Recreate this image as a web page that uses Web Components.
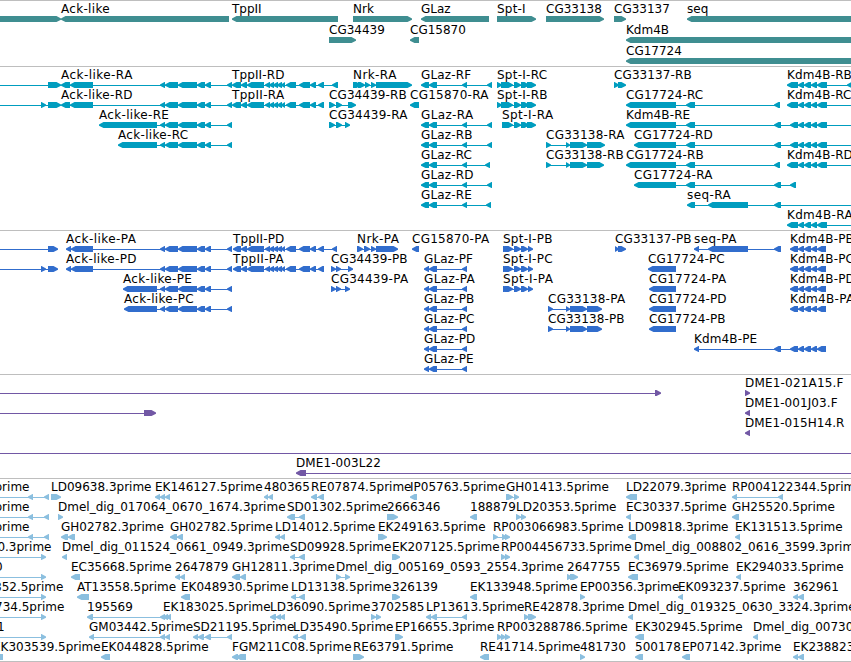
<!DOCTYPE html>
<html lang="en">
<head>
<meta charset="utf-8">
<title>Genome browser</title>
<style>
    html, body {
        margin: 0;
        background: #fff;
    }
</style>
</head>
<body>

<genome-view>
    <browser-track type="gene"></browser-track>
    <browser-track type="transcript"></browser-track>
    <browser-track type="protein"></browser-track>
    <browser-track type="bac"></browser-track>
    <browser-track type="est"></browser-track>
</genome-view>

<script>
// one string per feature: name|strand|exons|label position (default: first exon)
const ACK = '160-165 165-178 178-197 197-205 205-211 227-232'
const TPP = '241-247 247-264 265-270 269-274 273-278 277-282 281-285 286-296 299-310 310-316 318-324'
const KDM = '798-804 804-811 811-817 817-827'
const KDMP = '790-798 798-804 804-811 811-817 817-826'
const SPT = '501-509 504-513 514-521 521-529 527-536'
const SPTP = '503-509 505-513 514-521 521-528 528-533'

const tracks = {
    gene: { color: '#3f8e91', gap: 1, rows: [
        ['|>|-9-61', 'Ack-like|<|61-229', 'TppII|<|232-338', 'Nrk|>|353-412', 'GLaz|<|421-489', 'Spt-I|>|497-536',
            'CG33138|>|546-604', 'CG33137|>|614-626', 'seq|<|687-900'],
        ['CG34439|>|329-356', 'CG15870|<|410-419', 'Kdm4B|<|626-900'],
        ['CG17724|<|626-900'],
    ]},
    transcript: { color: '#009dbf', rows: [
        ['|>|-9--4 48-61', `Ack-like-RA|<|61-70 70-93 ${ACK}`, `TppII-RD|<|232-241 ${TPP} 332-338`,
            'Nrk-RA|>|353-361 358-365 365-370 371-376 376-412', 'GLaz-RF|<|421-429 429-437 462-467 487-492',
            `Spt-I-RC|>|497-502 ${SPT}`, 'CG33137-RB|>|614-619 618-626', `Kdm4B-RB|<|787-798 ${KDM} 847-856`],
        ['|>|-9--4 41-46 48-61', `Ack-like-RD|<|61-70 70-93 ${ACK}`, `TppII-RA|<|232-241 ${TPP}`,
            'CG34439-RB|>|329-335 336-342 348-356', 'CG15870-RA|<|410-419', `Spt-I-RB|>|497-502 ${SPT}`,
            'CG17724-RC|<|626-676 686-695 774-780', `Kdm4B-RC|<|787-798 ${KDM} 900-910`],
        [`Ack-like-RE|<|99-157 ${ACK}`, 'CG34439-RA|>|329-335 336-342 345-350',
            'GLaz-RA|<|421-429 429-437 462-467 487-492', 'Spt-I-RA|>|502-509 504-513 514-521 521-529 527-536',
            `Kdm4B-RE|<|626-676 686-695 774-781 790-798 ${KDM} 900-910`],
        [`Ack-like-RC|<|118-157 ${ACK}`, 'GLaz-RB|<|421-429 429-437 462-467 487-492',
            'CG33138-RA|>|546-551 566-570 570-587 587-605', `CG17724-RD|<|634-676 686-695 774-781 790-798 ${KDM} 900-910`],
        ['GLaz-RC|<|421-429 429-437 462-467 485-490', 'CG33138-RB|>|546-551 566-570 570-587 587-604',
            'CG17724-RB|<|626-676 686-695 774-780', `Kdm4B-RD|<|787-798 ${KDM} 900-910`],
        ['GLaz-RD|<|421-429 429-437 462-467 487-492', 'CG17724-RA|<|634-676 686-695 774-781 790-796'],
        ['GLaz-RE|<|421-429 429-437 462-467 486-491', 'seq-RA|<|687-695 708-748 774-781 900-910'],
        [`Kdm4B-RA|<|787-798 ${KDM} 900-910`],
    ]},
    protein: { color: '#316dcd', rows: [
        ['|>|-9--4 48-58', `Ack-like-PA|<|66-71 71-93 ${ACK}`, `TppII-PD|<|233-241 ${TPP} 332-337`,
            'Nrk-PA|>|357-363 364-370 371-376 376-398', 'CG15870-PA|<|412-419', `Spt-I-PB|>|${SPTP}`,
            'CG33137-PB|>|615-619 618-626', 'seq-PA|<|694-699 708-748 774-781', `Kdm4B-PB|<|${KDMP}`],
        ['|>|-9--4 41-46 48-58', `Ack-like-PD|<|66-71 71-93 ${ACK}`, `TppII-PA|<|233-241 ${TPP}`,
            'CG34439-PB|>|331-336 336-341 348-353', 'GLaz-PF|<|424-429 429-437 462-467', `Spt-I-PC|>|${SPTP}`,
            'CG17724-PC|<|648-676', `Kdm4B-PC|<|${KDMP}`],
        [`Ack-like-PE|<|123-157 ${ACK}`, 'CG34439-PA|>|331-336 336-341 345-350', 'GLaz-PA|<|424-429 429-437 462-467',
            `Spt-I-PA|>|${SPTP}`, 'CG17724-PA|<|649-676', `Kdm4B-PD|<|${KDMP}`],
        [`Ack-like-PC|<|124-157 ${ACK}`, 'GLaz-PB|<|424-429 429-437 462-467',
            'CG33138-PA|>|548-553 566-570 570-587 587-602', 'CG17724-PD|<|649-676', `Kdm4B-PA|<|${KDMP}`],
        ['GLaz-PC|<|424-429 429-437 462-467', 'CG33138-PB|>|548-553 566-570 570-587 587-602', 'CG17724-PB|<|649-676'],
        ['GLaz-PD|<|424-429 429-437 462-467', `Kdm4B-PE|<|694-699 774-781 ${KDMP}`],
        ['GLaz-PE|<|424-429 429-437 462-467'],
    ]},
    bac: { color: '#7258a5', rows: [
        ['|>|-9--4 655-661', 'DME1-021A15.F|>|745-750'],
        ['|>|-9--4 144-156', 'DME1-001J03.F|<|745-750'],
        ['DME1-015H14.R|<|745-750'],
        ['|>|-9--4 900-905'],
        ['DME1-003L22|<|296-306 900-905'],
    ]},
    est: { color: '#8bbfdf', rows: [
        ['prime|<|-9--4 28-33 44-49|-5.5', 'LD09638.3prime|>|51-61', 'EK146127.5prime|<|155-160 160-165 165-170',
            '480365|<|264-268 268-273', 'RE07874.5prime|<|311-317 318-324', 'IP05763.5prime|<|410-417',
            'GH01413.5prime|>|506-513 514-519', 'LD22079.3prime|<|626-637', 'RP004122344.5prime|<|732-737 778-783'],
        ['prime|<|-9--4 28-33 44-49|-5.5', 'Dmel_dig_017064_0670_1674.3prime|>|58-63', 'SD01302.5prime|<|287-295 299-305',
            '2666346|>|387-398', '188879|<|470-477', 'LD20353.5prime|>|516-521 521-526', 'EC30337.5prime|<|626-631',
            'GH25520.5prime|<|732-739'],
        ['prime|<|-9--4 28-33 44-49|-5.5', 'GH02782.3prime|<|61-68 68-75', 'GH02782.5prime|<|170-177 177-183',
            'LD14012.5prime|<|275-280 280-285', 'EK249163.5prime|>|378-387', 'RP003066983.5prime|>|493-498 502-507 505-510',
            'LD09818.3prime|<|628-636', 'EK131513.5prime|<|735-740'],
        ['0.3prime|>|-9--4 41-46|-2.6', 'Dmel_dig_011524_0661_0949.3prime|<|62-67', 'SD09928.5prime|<|290-295 299-305',
            'EK207125.5prime|>|392-400', 'RP004456733.5prime|>|501-506 505-510', 'Dmel_dig_008802_0616_3599.3prime|<|634-639'],
        ['0|>|-9--4 41-46|-5', 'EC35668.5prime|<|71-80', '2647879|<|175-180 180-185', 'GH12811.3prime|<|232-240 240-246',
            'Dmel_dig_005169_0593_2554.3prime|>|336-341 345-350', '2647755|>|567-572 570-578', 'EC36979.5prime|<|628-638',
            'EK294033.5prime|<|736-741'],
        ['852.5prime|>|-9--4 41-46|-6', 'AT13558.5prime|<|77-89', 'EK048930.5prime|<|181-190',
            'LD13138.5prime|<|291-296 299-305', '326139|>|392-400', 'EK133948.5prime|<|470-477', 'EP00356.3prime|>|580-585',
            'EK093237.5prime|<|678-683', '362961|<|793-798 798-804'],
        ['734.5prime|>|-9--4 41-46|-5', '195569|<|87-93 160-165', 'EK183025.5prime|<|163-168 166-171',
            'LD36090.5prime|<|270-276 276-281 280-285', '3702585|>|371-376 376-381', 'LP13613.5prime|<|426-431 431-437 462-467',
            'RE42878.3prime|>|524-529 528-536', 'Dmel_dig_019325_0630_3324.3prime|<|628-633'],
        ['1|>|-9--4 41-46|-3', 'GM03442.5prime|<|89-94 160-165 165-170', 'SD21195.5prime|<|193-198 198-204 205-211 227-232',
            'LD35490.5prime|<|293-298 300-306', 'EP16655.3prime|>|395-403', 'RP003288786.5prime|>|497-502 501-506 505-510',
            'EK302945.5prime|<|635-644', 'Dmel_dig_00730|<|753-758'],
        ['EK303539.5prime|<|-6-3|-7', 'EK044828.5prime|<|101-110', 'FGM211C08.5prime|<|232-238 236-246',
            'RE63791.5prime|>|353-364', 'RE41714.5prime|<|480-489', '481730|>|580-585', '500178|<|635-643',
            'EP07142.3prime|<|682-690', 'EK238823|<|793-798 798-804'],
    ]},
}

class FeatureRow extends HTMLElement {

    constructor() {
        super()
        this.attachShadow({ mode: 'open' })
    }

    set features(list) {
        this.shadowRoot.innerHTML = `
            <style>
                :host { display: block; height: 20px; }
                svg { display: block; width: 100%; height: 20px; overflow: visible; fill: currentColor; }
                text { fill: #000; font: 12px "DejaVu Sans", sans-serif; }
            </style>
            <svg>${list.map(f => this.draw(f)).join('')}</svg>
        `
    }

    draw(feature) {
        const [name, strand, blocks, labelX] = feature.split('|')
        const exons = blocks.split(' ').map(b => b.match(/^(-?\d+)-(-?\d+)$/).slice(1).map(Number))
        const start = exons[0][0]
        const end = exons[exons.length - 1][1]

        let out = ''
        if (exons.length > 1) {
            out += `<rect x="${start + 2}" y="18" width="${end - start - 4}" height="1"/>`
        }
        exons.forEach(([a, b]) => { out += `<path d="${this.arrow(a, b, strand)}"/>` })
        if (name) {
            out += `<text x="${labelX || start}" y="12" letter-spacing="${this.spacing(name)}">${name}</text>`
        }
        return out
    }

    spacing(name) {
        if (!name.includes('-')) return 0
        const extra = (name.match(/-/g) || []).length + 1.5 * (name.match(/A/g) || []).length
        return (extra / name.length).toFixed(2)
    }

    arrow(a, b, strand) {
        const head = Math.min(4.5, b - a)
        return strand === '<'
            ? `M${a} 17.4L${a + head} 15H${b}V21H${a + head}L${a} 18.8Z`
            : `M${b} 17.4L${b - head} 15H${a}V21H${b - head}L${b} 18.8Z`
    }

}

class BrowserTrack extends HTMLElement {

    constructor() {
        super()
        this.attachShadow({ mode: 'open' }).innerHTML = `
            <style>
                :host {
                    display: flex;
                    flex-direction: column;
                    padding-bottom: 3px;
                    border-top: 1px solid #bebebe;
                }
                :host(:last-child) {
                    padding-bottom: 2px;
                    border-bottom: 1px solid #bebebe;
                }
            </style>
        `
    }

    connectedCallback() {
        const track = tracks[this.getAttribute('type')]
        this.style.color = track.color
        this.style.gap = (track.gap || 0) + 'px'
        track.rows.forEach(list => {
            const row = document.createElement('feature-row')
            row.features = list
            this.shadowRoot.appendChild(row)
        })
    }

}

class GenomeView extends HTMLElement {

    constructor() {
        super()
        this.attachShadow({ mode: 'open' }).innerHTML = `
            <style>
                :host { display: block; width: 851px; height: 662px; overflow: hidden; }
            </style>
            <slot></slot>
        `
    }

}

customElements.define('feature-row', FeatureRow)
customElements.define('browser-track', BrowserTrack)
customElements.define('genome-view', GenomeView)
</script>
</body>
</html>
